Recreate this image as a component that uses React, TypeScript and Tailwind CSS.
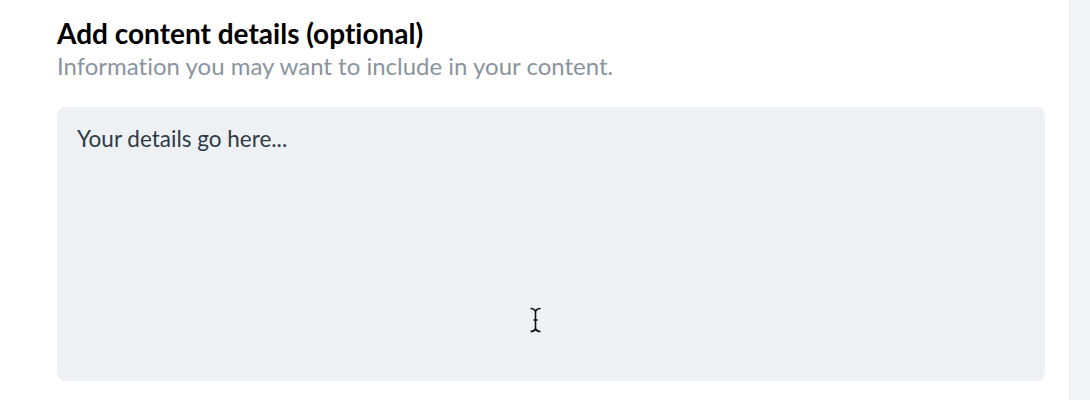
import React from "react";

export default function App() {
  return (
    <div className="flex h-[400px] w-[1090px] overflow-hidden bg-white font-['Lato',sans-serif] [font-variant-ligatures:none]">
      <main className="relative flex-1 pl-[57px] pr-[24px] pt-[16px]">
        <h2 className="text-[28px] font-bold leading-[34px] text-black">
          Add content details (optional)
        </h2>
        <p className="text-[24px] leading-[32px] text-[#8a949e]">
          Information you may want to include in your content.
        </p>
        <textarea
          placeholder="Your details go here..."
          className="mt-[25px] block h-[274px] w-full resize-none rounded-[8px] bg-[#eef1f4] px-[20px] py-[17px] text-[22.5px] leading-[30px] text-[#2f3a45] placeholder:text-[#2f3a45] focus:outline-none [font-variant-ligatures:none]"
        />
        {/* mouse cursor in the screenshot */}
        <svg
          className="pointer-events-none absolute left-[529px] top-[307px]"
          width="13"
          height="26"
          viewBox="0 0 13 26"
          fill="none"
          stroke="#111"
          strokeWidth="1.6"
        >
          <path d="M1.5 1.5c2 0 4 .8 5 2.5 1-1.7 3-2.5 5-2.5" />
          <path d="M6.5 4v18" />
          <path d="M4.5 13h4" />
          <path d="M1.5 24.5c2 0 4-.8 5-2.5 1 1.7 3 2.5 5 2.5" />
        </svg>
      </main>
      <aside className="w-[21px] border-l border-[#e6e8eb] bg-[#f4f5f7]" />
    </div>
  );
}
